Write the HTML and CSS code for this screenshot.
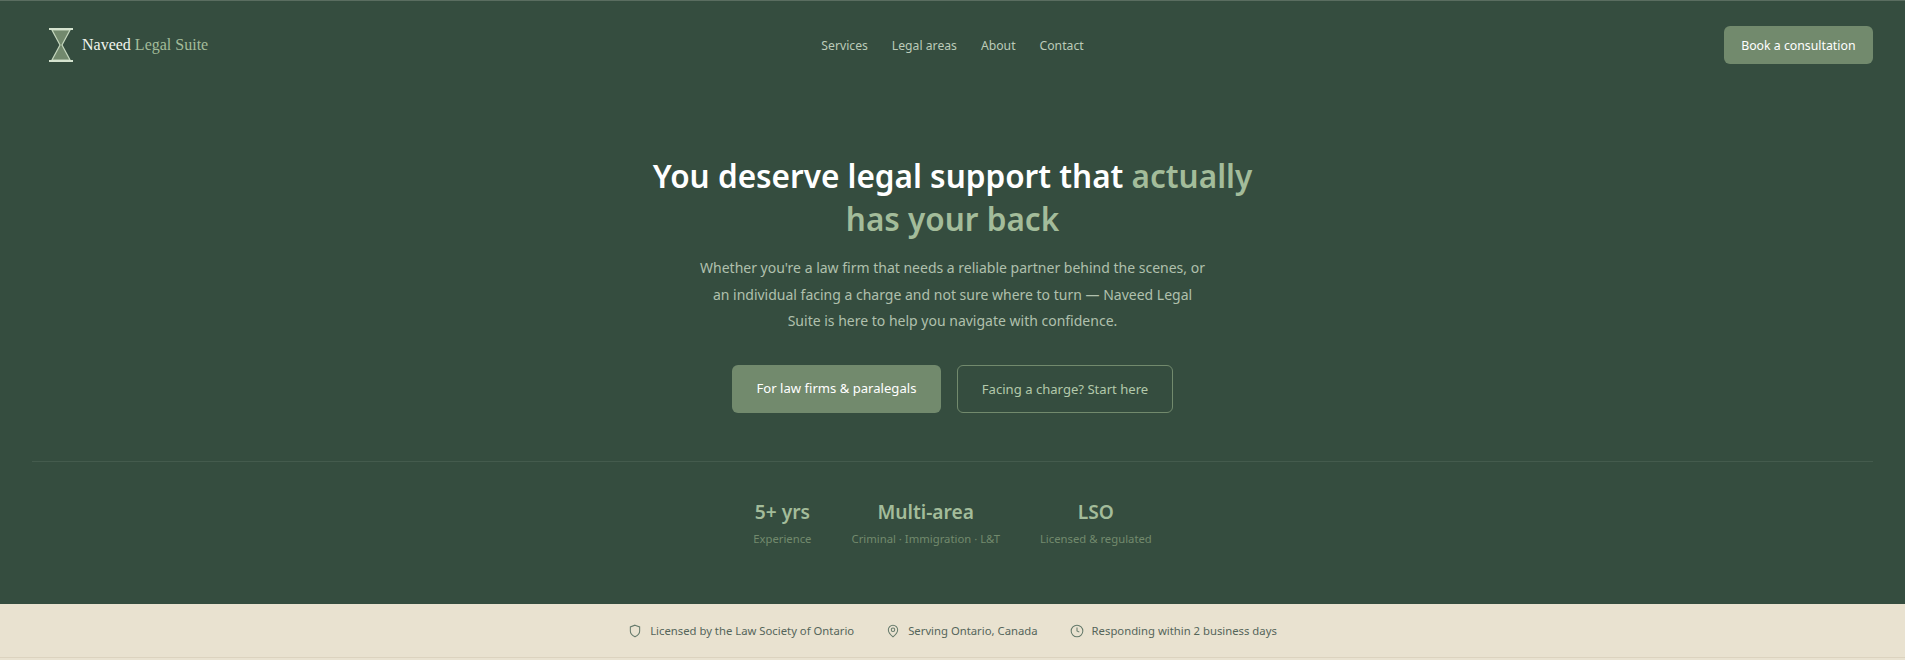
FILE: index.html
```html
<!DOCTYPE html>
<html lang="en">
<head>
  <meta charset="utf-8">
  <meta name="viewport" content="width=device-width, initial-scale=1.0">
  <title>Naveed Legal Suite</title>
  <link rel="stylesheet" href="styles.css">
</head>
<body>
  <div class="dark">
    <header class="navbar">
      <a class="logo" href="#">
        <svg class="logo-icon" width="26" height="36" viewBox="0 0 26 36">
          <path d="M4 3H22L14 18L22 33H4L12 18Z" fill="#72896d" stroke="#c4d6bd" stroke-width="1.2"/>
          <path d="M1 2H25M1 34H25" stroke="#d5e3cf" stroke-width="2"/>
        </svg>
        <span>Naveed <em>Legal Suite</em></span>
      </a>
      <nav class="nav-links">
        <a href="#">Services</a>
        <a href="#">Legal areas</a>
        <a href="#">About</a>
        <a href="#">Contact</a>
      </nav>
      <a class="btn-book" href="#">Book a consultation</a>
    </header>

    <section class="hero">
      <h1>You deserve legal support that <span>actually</span><br><span>has your back</span></h1>
      <p>Whether you're a law firm that needs a reliable partner behind the scenes, or an individual facing a charge and not sure where to turn — Naveed Legal Suite is here to help you navigate with confidence.</p>
      <div class="hero-btns">
        <a class="btn btn-fill" href="#">For law firms &amp; paralegals</a>
        <a class="btn btn-line" href="#">Facing a charge? Start here</a>
      </div>
    </section>

    <div class="stats">
      <div class="stat"><strong>5+ yrs</strong><small>Experience</small></div>
      <div class="stat"><strong>Multi-area</strong><small>Criminal · Immigration · L&amp;T</small></div>
      <div class="stat"><strong>LSO</strong><small>Licensed &amp; regulated</small></div>
    </div>
  </div>

  <div class="trust">
    <div class="trust-item">
      <svg width="14" height="14" viewBox="0 0 24 24"><path d="M12 2l8 3v7c0 5-3.500 8-8 10-4.500-2-8-5-8-10V5z"/></svg>
      Licensed by the Law Society of Ontario
    </div>
    <div class="trust-item">
      <svg width="14" height="14" viewBox="0 0 24 24"><path d="M20 10c0 6-8 12-8 12s-8-6-8-12a8 8 0 0 1 16 0z"/><circle cx="12" cy="10" r="3"/></svg>
      Serving Ontario, Canada
    </div>
    <div class="trust-item">
      <svg width="14" height="14" viewBox="0 0 24 24"><circle cx="12" cy="12" r="10"/><path d="M12 6v6l4 2"/></svg>
      Responding within 2 business days
    </div>
  </div>
</body>
</html>
```

FILE: styles.css
```css
* { box-sizing: border-box; }
body {
  margin: 0;
  font-family: "Noto Sans", "Open Sans", sans-serif;
  background: #e9e2d0;
  color: #fff;
}
a { text-decoration: none; color: inherit; }

.dark {
  background: #354d3f;
  border-top: 1px solid #5a6d60;
  padding: 0 32px;
  height: 604px;
}

.navbar {
  display: grid;
  grid-template-columns: 1fr auto 1fr;
  align-items: center;
  height: 88px;
}
.logo {
  display: flex; align-items: center; gap: 8px;
  margin-left: 16px;
  font-family: "Liberation Serif", serif;
  font-size: 16px;
  color: #f1f5ee;
}
.logo em { font-style: normal; color: #a3bc9a; }
.nav-links {
  display: flex; gap: 24px;
  font-size: 12.2px;
  color: #bccbb9;
}
.btn-book {
  justify-self: end;
  display: flex; align-items: center;
  height: 38px;
  padding: 0 17.5px;
  background: #728a6d;
  border-radius: 6px;
  font-size: 12.3px;
  color: #fff;
}

.hero {
  display: flex; flex-direction: column; align-items: center;
  text-align: center;
  padding-top: 65px;
  height: 373px;
  border-bottom: 1px solid #445b4d;
}
.hero h1 {
  margin: 0;
  width: 640px;
  font-size: 31.5px;
  font-weight: 600;
  line-height: 43px;
}
.hero h1 span { color: #a3bc9a; }
.hero p {
  margin: 15px 0 0;
  width: 515px;
  font-size: 14px;
  line-height: 26.700px;
  color: #b0c0ad;
}
.hero-btns { display: flex; gap: 16px; margin-top: 30px; }
.btn {
  display: flex; align-items: center; justify-content: center;
  height: 48px;
  border-radius: 6px;
  font-size: 13.1px;
}
.btn-fill { width: 209px; background: #728a6d; color: #fff; padding-bottom: 2px; }
.btn-line { width: 216px; border: 1px solid #728a6d; color: #b3c9ab; }

.stats {
  display: flex; justify-content: center; gap: 40px;
  padding-top: 36px;
}
.stat { display: flex; flex-direction: column; align-items: center; }
.stat strong {
  font-size: 19.200px; font-weight: 600; line-height: 27px;
  color: #a3bc9a;
}
.stat small {
  margin-top: 6px;
  font-size: 11.300px;
  color: #728a6d;
}

.trust {
  display: flex; justify-content: center; align-items: center; gap: 32px;
  height: 54px;
  border-bottom: 1px solid #dcd3bf;
  font-size: 11.300px;
  color: #55655a;
}
.trust-item { display: flex; align-items: center; gap: 8px; }
.trust-item svg { fill: none; stroke: #64796a; stroke-width: 1.75; }
```
